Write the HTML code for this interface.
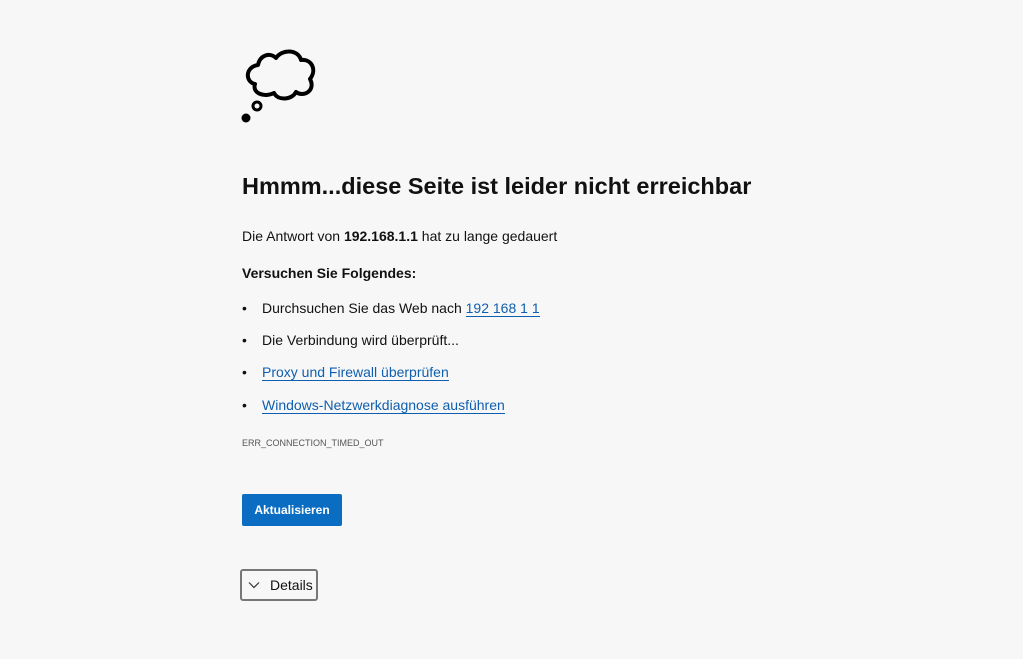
<!DOCTYPE html>
<html><head><meta charset="utf-8"><style>
body{margin:0;background:#f7f7f7;font-family:"Liberation Sans","DejaVu Sans",sans-serif;color:#111;width:1023px;height:659px;overflow:hidden;position:relative}
.a{position:absolute;left:242px;white-space:nowrap}
h1{margin:0;font-size:23.5px;font-weight:bold}
.t{font-size:14px}
a{color:#0f5fb0;text-decoration:none;border-bottom:1px solid #0f5fb0}
.li span.b{display:inline-block;width:20px}
.btn{position:absolute;left:242px;top:494px;width:100px;height:32px;background:#0a6dc2;color:#fff;font-size:12px;font-weight:bold;display:flex;align-items:center;justify-content:center;border-radius:2px}
.det{position:absolute;left:240px;top:569px;width:74px;height:28px;border:2px solid #777;border-radius:3px;font-size:14px;display:flex;align-items:center}
</style></head><body>
<svg style="position:absolute;left:236px;top:46px" width="90" height="82" viewBox="0 0 90 82">
<path d="M22 19 C24 9 34 6 40 12 C46 3 62 3 65 14 C76 13 81 24 74 33 C80 44 68 52 60 46 C56 54 42 55 38 47 C28 52 16 47 19 38 C9 36 9 21 22 19 Z" fill="none" stroke="#000" stroke-width="4" stroke-linejoin="round"/>
<circle cx="21" cy="60" r="4" fill="none" stroke="#000" stroke-width="3"/>
<circle cx="10" cy="72" r="4.5" fill="#000"/>
</svg>
<h1 class="a" style="top:173px">Hmmm...diese Seite ist leider nicht erreichbar</h1>
<div class="a t" style="top:228px">Die Antwort von <b>192.168.1.1</b> hat zu lange gedauert</div>
<div class="a t" style="top:265px;font-weight:bold">Versuchen Sie Folgendes:</div>
<div class="a t li" style="top:300px"><span class="b">•</span>Durchsuchen Sie das Web nach <a>192 168 1 1</a></div>
<div class="a t li" style="top:332px"><span class="b">•</span>Die Verbindung wird überprüft...</div>
<div class="a t li" style="top:364px"><span class="b">•</span><a>Proxy und Firewall überprüfen</a></div>
<div class="a t li" style="top:397px"><span class="b">•</span><a>Windows-Netzwerkdiagnose ausführen</a></div>
<div class="a" style="top:438px;font-size:9px;color:#555">ERR_CONNECTION_TIMED_OUT</div>
<div class="btn">Aktualisieren</div>
<div class="det"><svg style="margin:0 10px 0 6px" width="12" height="8" viewBox="0 0 12 8"><path d="M1 1.5 L6 6.5 L11 1.5" fill="none" stroke="#333" stroke-width="1.2"/></svg>Details</div>
</body></html>
